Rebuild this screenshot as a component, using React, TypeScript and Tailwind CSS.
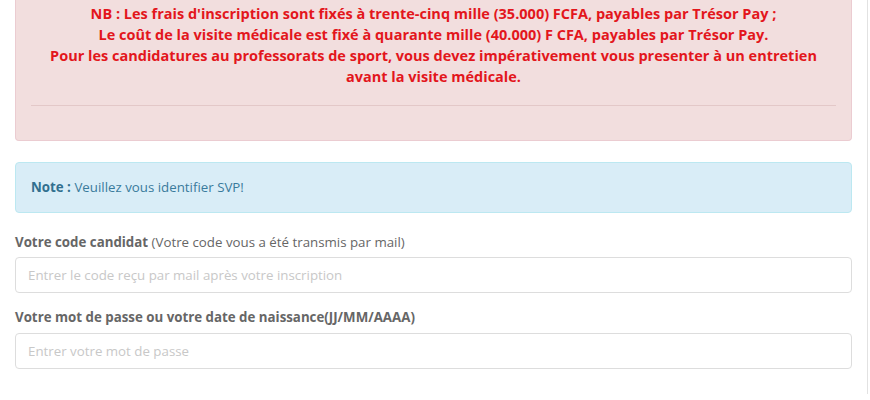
import React from 'react';

const font = { fontFamily: '"Open Sans", "Liberation Sans", sans-serif' };

export default function App() {
  return (
    <div className="h-[400px] w-[870px] overflow-hidden bg-white" style={font}>
      <div className="h-[394px] w-[868px] border-r border-[#e2e2e2] px-[15px]">
        <div className="mb-[21px] flex h-[141px] flex-col justify-end rounded-b-[4px] border border-t-0 border-[#ebccd1] bg-[#f2dede] px-[15px] pb-[34px]">
          <div className="text-center text-[14.5px] font-bold leading-[21px] text-[#e3161c]">
            <p>NB : Les frais d'inscription sont fixés à trente-cinq mille (35.000) FCFA, payables par Trésor Pay ;</p>
            <p>Le coût de la visite médicale est fixé à quarante mille (40.000) F CFA, payables par Trésor Pay.</p>
            <p>
              Pour les candidatures au professorats de sport, vous devez impérativement vous presenter à un entretien
              <br />
              avant la visite médicale.
            </p>
          </div>
          <hr className="mt-[18px] border-t border-[#e3c8c8]" />
        </div>

        <div className="mb-[20px] rounded-[4px] border border-[#bce8f1] bg-[#d9edf7] px-[15px] py-[15px] text-[13.3px] leading-[19px] text-[#3a7b9c]">
          <strong className="text-[#31708f]">Note :</strong> Veuillez vous identifier SVP!
        </div>

        <div className="mb-[15px]">
          <label className="mb-[6px] block text-[13.3px] leading-[18px] text-[#666]">
            <span className="font-bold">Votre code candidat</span> (Votre code vous a été transmis par mail)
          </label>
          <input
            className="block h-[36px] w-full rounded-[4px] border border-[#ddd] px-[12px] text-[13.3px] text-[#555] placeholder:text-[#c8c8c8] outline-none"
            placeholder="Entrer le code reçu par mail après votre inscription"
          />
        </div>

        <div>
          <label className="mb-[7px] block text-[13.3px] font-bold leading-[18px] text-[#666]">
            Votre mot de passe ou votre date de naissance(JJ/MM/AAAA)
          </label>
          <input
            type="password"
            className="block h-[36px] w-full rounded-[4px] border border-[#ddd] px-[12px] text-[13.3px] text-[#555] placeholder:text-[#c8c8c8] outline-none"
            placeholder="Entrer votre mot de passe"
          />
        </div>
      </div>
    </div>
  );
}
